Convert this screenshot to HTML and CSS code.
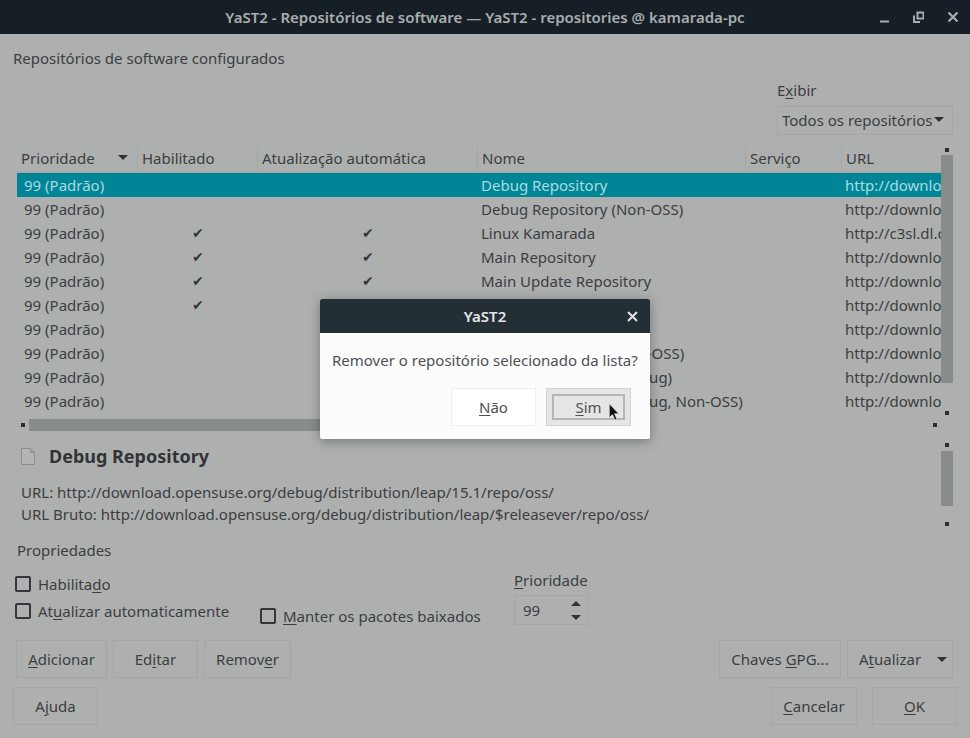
FILE: index.html
```html
<!DOCTYPE html>
<html lang="pt-BR">
<head>
    <meta charset="UTF-8">
    <title>YaST2 - Repositórios de software</title>
    <link rel="stylesheet" href="styles.css">
</head>
<body>
    <div class="window">
        <header class="titlebar">
            <span class="titlebar-text">YaST2 - Repositórios de software — YaST2 - repositories @ kamarada-pc</span>
            <div class="win-controls">
                <svg width="12" height="12" viewBox="0 0 12 12"><path d="M3 10.500h9" stroke="#a9adae" stroke-width="2"/></svg>
                <svg width="12" height="12" viewBox="0 0 12 12"><path d="M5.500 1.500h6v6h-6zM2 4.500v6.500h6" fill="none" stroke="#a9adae" stroke-width="2"/></svg>
                <svg width="12" height="12" viewBox="0 0 12 12"><path d="M1.500 1.500l9 9M10.500 1.500l-9 9" stroke="#a9adae" stroke-width="2.200"/></svg>
            </div>
        </header>

        <main class="content">
            <div class="page-heading">Repositórios de software configurados</div>

            <div class="filter-row">
                <div class="filter">
                    <label class="filter-label">E<u>x</u>ibir</label>
                    <div class="combo"><span>Todos os repositórios</span><span class="arrow-down"></span></div>
                </div>
            </div>

            <div class="table-area">
                <div class="table">
                    <div class="row head">
                        <div class="cell">Prioridade<span class="arrow-down sort"></span></div>
                        <div class="cell">Habilitado</div>
                        <div class="cell">Atualização automática</div>
                        <div class="cell">Nome</div>
                        <div class="cell">Serviço</div>
                        <div class="cell">URL</div>
                    </div>
                    <div class="row selected">
                        <div class="cell">99 (Padrão)</div><div class="cell"></div><div class="cell"></div>
                        <div class="cell">Debug Repository</div><div class="cell"></div><div class="cell">http://downlo</div>
                    </div>
                    <div class="row">
                        <div class="cell">99 (Padrão)</div><div class="cell"></div><div class="cell"></div>
                        <div class="cell">Debug Repository (Non-OSS)</div><div class="cell"></div><div class="cell">http://downlo</div>
                    </div>
                    <div class="row">
                        <div class="cell">99 (Padrão)</div><div class="cell check">✔</div><div class="cell check">✔</div>
                        <div class="cell">Linux Kamarada</div><div class="cell"></div><div class="cell">http://c3sl.dl.c</div>
                    </div>
                    <div class="row">
                        <div class="cell">99 (Padrão)</div><div class="cell check">✔</div><div class="cell check">✔</div>
                        <div class="cell">Main Repository</div><div class="cell"></div><div class="cell">http://downlo</div>
                    </div>
                    <div class="row">
                        <div class="cell">99 (Padrão)</div><div class="cell check">✔</div><div class="cell check">✔</div>
                        <div class="cell">Main Update Repository</div><div class="cell"></div><div class="cell">http://downlo</div>
                    </div>
                    <div class="row">
                        <div class="cell">99 (Padrão)</div><div class="cell check">✔</div><div class="cell"></div>
                        <div class="cell"></div><div class="cell"></div><div class="cell">http://downlo</div>
                    </div>
                    <div class="row">
                        <div class="cell">99 (Padrão)</div><div class="cell"></div><div class="cell"></div>
                        <div class="cell"></div><div class="cell"></div><div class="cell">http://downlo</div>
                    </div>
                    <div class="row">
                        <div class="cell">99 (Padrão)</div><div class="cell"></div><div class="cell"></div>
                        <div class="cell">Source Repository (Non-OSS)</div><div class="cell"></div><div class="cell">http://downlo</div>
                    </div>
                    <div class="row">
                        <div class="cell">99 (Padrão)</div><div class="cell"></div><div class="cell"></div>
                        <div class="cell">Update Repository (Debug)</div><div class="cell"></div><div class="cell">http://downlo</div>
                    </div>
                    <div class="row">
                        <div class="cell">99 (Padrão)</div><div class="cell"></div><div class="cell"></div>
                        <div class="cell">Update Repository (Debug, Non-OSS)</div><div class="cell"></div><div class="cell">http://downlo</div>
                    </div>
                    <div class="hscroll">
                        <span class="dot"></span>
                        <span class="hthumb"></span>
                        <span class="dot"></span>
                    </div>
                </div>
                <div class="vscroll table-scroll">
                    <span class="dot"></span>
                    <span class="vthumb"></span>
                    <span class="dot"></span>
                </div>
            </div>

            <div class="detail">
                <div class="detail-body">
                    <div class="detail-title">
                        <svg class="file-icon" width="14" height="17" viewBox="0 0 14 17"><path d="M.5.500h9l4 4v12h-13z" fill="#b3b5b4" stroke="#8d8f8f"/><path d="M9.500.500v4h4" fill="#9c9e9e" stroke="#8d8f8f"/></svg>
                        <span>Debug Repository</span>
                    </div>
                    <div class="detail-line">URL: http://download.opensuse.org/debug/distribution/leap/15.1/repo/oss/</div>
                    <div class="detail-line">URL Bruto: http://download.opensuse.org/debug/distribution/leap/$releasever/repo/oss/</div>
                </div>
                <div class="vscroll detail-scroll">
                    <span class="dot"></span>
                    <span class="vthumb"></span>
                    <span class="dot"></span>
                </div>
            </div>

            <div class="props-title">Propriedades</div>
            <div class="props">
                <div class="props-col">
                    <label class="checkline"><span class="box"></span><span>Habilita<u>d</u>o</span></label>
                    <label class="checkline"><span class="box"></span><span>At<u>u</u>alizar automaticamente</span></label>
                </div>
                <label class="checkline keep"><span class="box"></span><span><u>M</u>anter os pacotes baixados</span></label>
                <div class="priority">
                    <div class="priority-label"><u>P</u>rioridade</div>
                    <div class="spin">
                        <span>99</span>
                        <div class="spin-arrows"><span class="arrow-up"></span><span class="arrow-down"></span></div>
                    </div>
                </div>
            </div>

            <div class="button-row actions">
                <div class="btn w-add"><span><u>A</u>dicionar</span></div>
                <div class="btn w-edit"><span>Ed<u>i</u>tar</span></div>
                <div class="btn w-rem"><span>Remov<u>e</u>r</span></div>
                <div class="spacer"></div>
                <div class="btn w-gpg"><span>Chaves <u>G</u>PG...</span></div>
                <div class="btn w-upd"><span>A<u>t</u>ualizar</span><span class="arrow-down"></span></div>
            </div>

            <div class="button-row footer">
                <div class="btn w-help"><span>A<u>j</u>uda</span></div>
                <div class="spacer"></div>
                <div class="btn w-cancel"><span><u>C</u>ancelar</span></div>
                <div class="btn w-ok"><span><u>O</u>K</span></div>
            </div>
        </main>

        <div class="dialog">
            <div class="dialog-title">
                <span>YaST2</span>
                <svg class="dialog-close" width="11" height="11" viewBox="0 0 11 11"><path d="M1 1l9 9M10 1l-9 9" stroke="#e3e6e7" stroke-width="2"/></svg>
            </div>
            <div class="dialog-body">
                <div class="dialog-text">Remover o repositório selecionado da lista?</div>
                <div class="dialog-buttons">
                    <div class="btn dlg-no"><span><u>N</u>ão</span></div>
                    <div class="btn dlg-yes"><span class="dlg-focus"><span><u>S</u>im</span></span></div>
                </div>
            </div>
            <svg class="cursor" width="12" height="19" viewBox="0 0 12 21"><path d="M.7.700v15.500l3.600-3.300 2.600 6 2.400-1-2.600-5.900h4.800z" fill="#111" stroke="#dcdcdc" stroke-width=".9"/></svg>
        </div>
    </div>
</body>
</html>
```

FILE: styles.css
```css
* {
    box-sizing: border-box;
}

body {
    margin: 0;
    font-family: "Noto Sans", sans-serif;
    font-size: 15px;
    color: #3b3e41;
    background-color: #aeb0af;
}

u {
    text-underline-offset: 2px;
    text-decoration-thickness: 1px;
}

.window {
    position: relative;
    width: 970px;
    height: 738px;
    overflow: hidden;
    background-color: #aeb0af;
}

.titlebar {
    display: flex;
    align-items: center;
    justify-content: center;
    position: relative;
    height: 34px;
    background-color: #161f25;
    color: #a9adae;
    font-weight: 600;
}

.win-controls {
    position: absolute;
    right: 11px;
    top: 11px;
    display: flex;
    gap: 23px;
}

.content {
    padding: 14px 0 0 0;
}

.page-heading {
    padding-left: 13px;
    height: 20px;
    line-height: 20px;
}

.filter-row {
    display: flex;
    justify-content: flex-end;
    height: 78px;
    padding: 12px 17px 0 0;
}

.filter {
    width: 176px;
}

.filter-label {
    display: block;
    height: 20px;
    line-height: 20px;
}

.combo {
    display: flex;
    align-items: center;
    justify-content: space-between;
    height: 29px;
    margin-top: 6px;
    padding: 0 8px 2px 4px;
    border: 1px solid #a5a7a6;
    white-space: nowrap;
}

.arrow-down {
    display: inline-block;
    width: 0;
    height: 0;
    border-left: 5px solid transparent;
    border-right: 5px solid transparent;
    border-top: 5px solid #2f3235;
}

.arrow-up {
    display: inline-block;
    width: 0;
    height: 0;
    border-left: 5px solid transparent;
    border-right: 5px solid transparent;
    border-bottom: 5px solid #2f3235;
}

.table-area {
    display: flex;
    padding: 0 17px;
    height: 294px;
}

.table {
    width: 924px;
    overflow: hidden;
}

.row {
    display: grid;
    grid-template-columns: 121px 120px 220px 268px 96px 99px;
    height: 24px;
    line-height: 24px;
}

.row .cell {
    padding-left: 7px;
    overflow: hidden;
    white-space: nowrap;
}

.row .cell:nth-child(4),
.row .cell:nth-child(6) {
    padding-left: 3px;
}

.row .check {
    padding-left: 0;
    text-align: center;
    font-size: 14px;
    color: #33363a;
}

.head {
    height: 27px;
    line-height: 25px;
    border-bottom: 1px solid #a5a7a6;
}

.head .cell,
.head .cell:nth-child(4),
.head .cell:nth-child(6) {
    position: relative;
    padding-left: 4px;
    border-right: 1px solid #a5a7a6;
}

.head .cell:last-child {
    border-right: none;
}

.sort {
    position: absolute;
    right: 9px;
    top: 9px;
}

.selected {
    background-color: #008596;
    color: #a9dbe0;
}

.hscroll {
    display: flex;
    align-items: center;
    gap: 4px;
    height: 12px;
    margin-top: 6px;
    padding: 0 4px;
}

.hscroll .hthumb {
    width: 400px;
    height: 12px;
    background-color: #888c8c;
}

.hscroll .dot:last-child {
    margin-left: auto;
}

.dot {
    display: block;
    flex: none;
    width: 4px;
    height: 4px;
    background-color: #2b2e31;
}

.vscroll {
    display: flex;
    flex-direction: column;
    align-items: center;
    width: 12px;
    flex: none;
}

.vthumb {
    display: block;
    width: 12px;
    background-color: #888c8c;
}

.table-scroll .dot {
    margin-top: 2px;
}

.table-scroll .vthumb {
    height: 228px;
    margin-top: 3px;
}

.table-scroll .dot:last-child {
    margin-top: 28px;
}

.detail {
    display: flex;
    justify-content: space-between;
    height: 100px;
    padding: 0 17px 0 21px;
}

.detail-title {
    display: flex;
    align-items: center;
    gap: 14px;
    height: 24px;
    margin-top: 4px;
    margin-bottom: 13px;
    font-size: 18px;
    font-weight: 700;
    color: #313437;
}

.detail-line {
    height: 22px;
    line-height: 22px;
    white-space: nowrap;
}

.detail-scroll .dot {
    margin-top: 3px;
}

.detail-scroll .vthumb {
    height: 55px;
    margin-top: 4px;
}

.detail-scroll .dot:last-child {
    margin-top: 16px;
}

.props-title {
    padding-left: 17px;
    height: 20px;
    line-height: 20px;
}

.props {
    display: flex;
    align-items: flex-start;
    height: 80px;
    padding: 14px 0 0 15px;
}

.props-col {
    width: 245px;
    display: flex;
    flex-direction: column;
    gap: 7px;
}

.checkline {
    display: flex;
    align-items: center;
    gap: 7px;
    height: 20px;
    white-space: nowrap;
}

.box {
    display: block;
    flex: none;
    width: 16px;
    height: 16px;
    border: 2px solid #33363a;
    border-radius: 2px;
}

.keep {
    width: 254px;
    margin-top: 32px;
}

.priority {
    margin-top: -4px;
}

.priority-label {
    height: 20px;
    line-height: 20px;
}

.spin {
    display: flex;
    align-items: center;
    justify-content: space-between;
    width: 74px;
    height: 30px;
    margin-top: 5px;
    padding: 0 6px 0 8px;
    border: 1px solid #a5a7a6;
}

.spin-arrows {
    display: flex;
    flex-direction: column;
    gap: 9px;
}

.button-row {
    display: flex;
}

.actions {
    gap: 6px;
    padding: 0 17px 0 16px;
    height: 38px;
}

.footer {
    margin-top: 9px;
    padding: 0 13px;
}

.spacer {
    flex: 1;
}

.btn {
    display: flex;
    align-items: center;
    justify-content: center;
    height: 38px;
    border: 1px solid #a5a7a6;
    white-space: nowrap;
}

.w-add { width: 91px; }
.w-edit { width: 85px; }
.w-rem { width: 87px; }
.w-gpg { width: 122px; }
.w-help { width: 85px; }
.w-cancel { width: 86px; }
.w-ok { width: 85px; margin-left: 15px; }

.w-upd {
    width: 106px;
    justify-content: space-between;
    padding: 0 5px 0 11px;
}

.dialog {
    position: absolute;
    left: 320px;
    top: 299px;
    width: 330px;
    height: 140px;
    background-color: #fcfcfc;
    border-radius: 2px;
    box-shadow: 0 2px 12px rgba(0, 0, 0, 0.35);
    color: #4d5053;
}

.dialog-title {
    position: relative;
    display: flex;
    align-items: center;
    justify-content: center;
    height: 34px;
    background-color: #232e35;
    border-radius: 2px 2px 0 0;
    color: #e3e6e7;
    font-weight: 600;
}

.dialog-close {
    position: absolute;
    right: 12px;
    top: 12px;
}

.dialog-body {
    padding: 15px 12px 0 12px;
}

.dialog-text {
    height: 24px;
    line-height: 24px;
    white-space: nowrap;
}

.dialog-buttons {
    display: flex;
    justify-content: flex-end;
    gap: 10px;
    margin-top: 16px;
    padding-right: 7px;
}

.dlg-no {
    width: 85px;
    border-color: #eeeeee;
    background-color: #fff;
}

.dlg-yes {
    width: 85px;
    padding: 5px;
    border-color: #d4d4d4;
    background-color: #e5e5e5;
}

.dlg-focus {
    display: flex;
    align-items: center;
    justify-content: center;
    width: 100%;
    height: 100%;
    border: 2px solid #b5b5b5;
}

.cursor {
    position: absolute;
    left: 288px;
    top: 104px;
}
```
